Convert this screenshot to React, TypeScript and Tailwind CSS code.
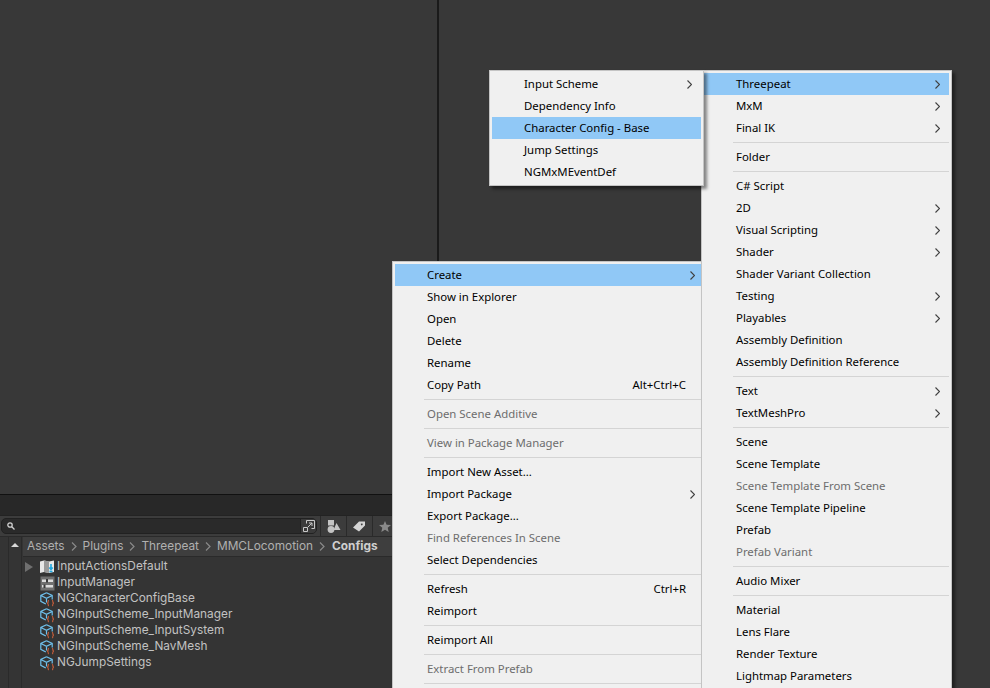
type Row = { label?: string; arrow?: boolean; off?: boolean; hot?: boolean; keys?: string; sep?: boolean };

const rootMenu: Row[] = [
  { label: "Create", arrow: true, hot: true },
  { label: "Show in Explorer" },
  { label: "Open" },
  { label: "Delete" },
  { label: "Rename" },
  { label: "Copy Path", keys: "Alt+Ctrl+C" },
  { sep: true },
  { label: "Open Scene Additive", off: true },
  { sep: true },
  { label: "View in Package Manager", off: true },
  { sep: true },
  { label: "Import New Asset..." },
  { label: "Import Package", arrow: true },
  { label: "Export Package..." },
  { label: "Find References In Scene", off: true },
  { label: "Select Dependencies" },
  { sep: true },
  { label: "Refresh", keys: "Ctrl+R" },
  { label: "Reimport" },
  { sep: true },
  { label: "Reimport All" },
  { sep: true },
  { label: "Extract From Prefab", off: true },
  { sep: true },
];

const createMenu: Row[] = [
  { label: "Threepeat", arrow: true, hot: true },
  { label: "MxM", arrow: true },
  { label: "Final IK", arrow: true },
  { sep: true },
  { label: "Folder" },
  { sep: true },
  { label: "C# Script" },
  { label: "2D", arrow: true },
  { label: "Visual Scripting", arrow: true },
  { label: "Shader", arrow: true },
  { label: "Shader Variant Collection" },
  { label: "Testing", arrow: true },
  { label: "Playables", arrow: true },
  { label: "Assembly Definition" },
  { label: "Assembly Definition Reference" },
  { sep: true },
  { label: "Text", arrow: true },
  { label: "TextMeshPro", arrow: true },
  { sep: true },
  { label: "Scene" },
  { label: "Scene Template" },
  { label: "Scene Template From Scene", off: true },
  { label: "Scene Template Pipeline" },
  { label: "Prefab" },
  { label: "Prefab Variant", off: true },
  { sep: true },
  { label: "Audio Mixer" },
  { sep: true },
  { label: "Material" },
  { label: "Lens Flare" },
  { label: "Render Texture" },
  { label: "Lightmap Parameters" },
];

const threepeatMenu: Row[] = [
  { label: "Input Scheme", arrow: true },
  { label: "Dependency Info" },
  { label: "Character Config - Base", hot: true },
  { label: "Jump Settings" },
  { label: "NGMxMEventDef" },
];

const crumbs = ["Assets", "Plugins", "Threepeat", "MMCLocomotion"];
const scripts = [
  "NGCharacterConfigBase",
  "NGInputScheme_InputManager",
  "NGInputScheme_InputSystem",
  "NGInputScheme_NavMesh",
  "NGJumpSettings",
];

function Menu({ rows, className }: { rows: Row[]; className: string }) {
  return (
    <div
      className={`absolute border border-[#c4c4c4] bg-[#f0f0f0] p-[2px] font-['Noto_Sans',sans-serif] text-[11.4px] text-black shadow-[3px_3px_3px_rgba(0,0,0,0.45)] ${className}`}
    >
      {rows.map((row, i) =>
        row.sep ? (
          <div key={i} className="flex h-[7px] items-center pl-[29px]">
            <div className="h-px w-full bg-[#d4d4d4]" />
          </div>
        ) : (
          <div
            key={i}
            className={`flex h-[22px] items-center justify-between pl-[32px] pr-[9px] ${row.hot ? "bg-[#90c8f6]" : ""} ${row.off ? "text-[#6d6d6d]" : ""}`}
          >
            <span className="whitespace-nowrap">{row.label}</span>
            {row.keys && <span className="mr-[9px] whitespace-nowrap">{row.keys}</span>}
            {row.arrow && (
              <svg width="5" height="9" viewBox="0 0 5 9" fill="none" stroke="#404040" strokeWidth="1.1">
                <path d="m.5 .5 4 4-4 4" />
              </svg>
            )}
          </div>
        ),
      )}
    </div>
  );
}

function ScriptableIcon() {
  return (
    <svg width="15" height="15" viewBox="0 0 15 15" fill="none" className="shrink-0">
      <path d="M6.5 .8 12.2 3.5V7.5M6.5 .8 .8 3.5v5.8L5.8 12M.8 3.5 6.5 6.3 12.2 3.5M6.5 6.3V10.5" stroke="#6fc0ec" strokeWidth="1.2" />
      <path d="M9 8.3c-1 0-.8.8-.8 1.7 0 .7-.3 1-.8 1.1.5.1.8.4.8 1.1 0 .9-.2 1.7.8 1.7M12 8.3c1 0 .8.8.8 1.7 0 .7.3 1 .8 1.1-.5.1-.8.4-.8 1.1 0 .9.2 1.7-.8 1.7" stroke="#f0693c" strokeWidth="1" />
    </svg>
  );
}

function ActionsIcon() {
  return (
    <svg width="15" height="15" viewBox="0 0 15 15" className="shrink-0">
      <path d="M0 1.5 4 0.5 9 1.5 14 0.5V12L9 13 4 12 0 13Z" fill="#e8e8e8" />
      <path d="M4 0.5 9 1.5V13L4 12Z" fill="#9a9a9a" />
      <path d="M11 4v5M9.3 7.5 11 9.5 12.7 7.5" stroke="#1ea7e1" strokeWidth="1.6" fill="none" />
      <path d="M9.5 11.5h3" stroke="#1ea7e1" strokeWidth="1.6" />
    </svg>
  );
}

function ManagerIcon() {
  return (
    <svg width="15" height="15" viewBox="0 0 15 15" className="shrink-0">
      <rect width="14" height="14" x="0.5" y="0.5" fill="#707070" />
      <rect x="2" y="3.5" width="11" height="2.5" fill="#dcdcdc" />
      <rect x="2" y="9" width="11" height="2.5" fill="#dcdcdc" />
      <rect x="6" y="3" width="2" height="3.5" fill="#3a3a3a" />
      <rect x="3.5" y="8.5" width="2" height="3.5" fill="#3a3a3a" />
    </svg>
  );
}

function AssetRow({ icon, label, caret }: { icon: React.ReactNode; label: string; caret?: boolean }) {
  return (
    <div className="flex h-4 items-center pl-[25px]">
      <div className="w-[15px] shrink-0">
        {caret && (
          <svg width="8" height="10" viewBox="0 0 8 10">
            <path d="M0 0 8 5 0 10Z" fill="#6f6f6f" />
          </svg>
        )}
      </div>
      {icon}
      <span className="ml-[2px] whitespace-nowrap">{label}</span>
    </div>
  );
}

function ProjectPanel() {
  return (
    <div className="flex flex-1 flex-col bg-[#343434] font-['Inter',sans-serif] text-[11.85px] text-[#c2c2c2]">
      <div className="h-px bg-[#111111]" />
      <div className="h-5 bg-[#282828]" />
      <div className="flex h-[21px] items-center border-t border-[#232323] bg-[#3c3c3c]">
        <div className="ml-px flex h-4 w-[316px] items-center justify-between overflow-hidden rounded-[5px] border border-[#212121] bg-[#2a2a2a] pl-[5px]">
          <svg width="8" height="8" viewBox="0 0 8 8" fill="none" stroke="#d0d0d0" strokeWidth="1.3">
            <circle cx="3" cy="3" r="2.2" />
            <path d="m4.8 4.8 2.7 2.7" />
          </svg>
          <div className="flex h-full w-[16px] items-center justify-center border-l border-[#212121] bg-[#3a3a3a]">
            <svg width="12" height="12" viewBox="0 0 12 12" fill="none" stroke="#c8c8c8">
              <path d="M3.5 3.5v-3h8v8h-3M.5 7.5h4v4h-4ZM5 7l4-4M6 3h3v3" />
            </svg>
          </div>
        </div>
        <div className="ml-[3px] flex h-full w-[26px] items-center justify-center border-l border-[#2a2a2a]">
          <svg width="14" height="13" viewBox="0 0 14 13" fill="#c4c4c4">
            <rect x="1" y="0" width="6" height="5.5" />
            <circle cx="4" cy="9.5" r="3.4" />
            <path d="M9.5 3 13.5 10H6.5Z" />
          </svg>
        </div>
        <div className="flex h-full w-[26px] items-center justify-center border-l border-[#2a2a2a] pr-[2px]">
          <svg width="12" height="11" viewBox="0 0 13 11" fill="#d4d4d4">
            <path d="M0 6.5 6.5 0H13V4.5L6.5 11ZM9.5 2.2a1 1 0 1 0 .01 0Z" fillRule="evenodd" />
          </svg>
        </div>
        <div className="flex h-full w-[26px] items-center justify-center border-l border-[#2a2a2a] pr-[2px]">
          <svg width="12" height="11" viewBox="0 0 12 11" fill="#8a8a8a">
            <path d="M6 0 7.6 3.8 12 4.1 8.7 6.8 9.7 11 6 8.7 2.3 11 3.3 6.8 0 4.1 4.4 3.8Z" />
          </svg>
        </div>
      </div>
      <div className="flex flex-1 border-t border-[#2a2a2a]">
        <div className="w-[9px] border-r border-[#2a2a2a]" />
        <div className="flex w-[13px] justify-center border-r border-[#2a2a2a] pt-[6px]">
          <svg width="8" height="4" viewBox="0 0 8 4">
            <path d="M0 4 4 0 8 4Z" fill="#d8d8d8" />
          </svg>
        </div>
        <div className="-ml-[22px] flex-1">
          <div className="ml-[23px] flex h-5 items-center gap-[5px] border-b border-[#2a2a2a] bg-[#3e3e3e] pl-[4px] text-[#b0b0b0]">
            {crumbs.map((c) => (
              <div key={c} className="flex items-center gap-[5px]">
                <span>{c}</span>
                <svg width="6" height="9" viewBox="0 0 6 9" fill="none" stroke="#8a8a8a" strokeWidth="1.2" className="mx-[1px]">
                  <path d="m1 .5 4 4-4 4" />
                </svg>
              </div>
            ))}
            <span className="ml-px font-bold text-[#cfcfcf]">Configs</span>
          </div>
          <div className="pt-[2px]">
            <AssetRow caret icon={<ActionsIcon />} label="InputActionsDefault" />
            <AssetRow icon={<ManagerIcon />} label="InputManager" />
            {scripts.map((s) => (
              <AssetRow key={s} icon={<ScriptableIcon />} label={s} />
            ))}
          </div>
        </div>
      </div>
    </div>
  );
}

export default function App() {
  return (
    <div className="relative flex h-[688px] w-[990px] overflow-hidden bg-[#383838]">
      <div className="flex w-[437px] flex-col">
        <div className="h-[494px]" />
        <ProjectPanel />
      </div>
      <div className="h-[494px] w-[2px] bg-[#1a1a1a]" />

      <Menu rows={rootMenu} className="left-[392px] top-[261px] w-[315px]" />
      <Menu rows={createMenu} className="left-[701px] top-[70px] w-[251px]" />
      <Menu rows={threepeatMenu} className="left-[489px] top-[70px] w-[215px]" />
    </div>
  );
}
